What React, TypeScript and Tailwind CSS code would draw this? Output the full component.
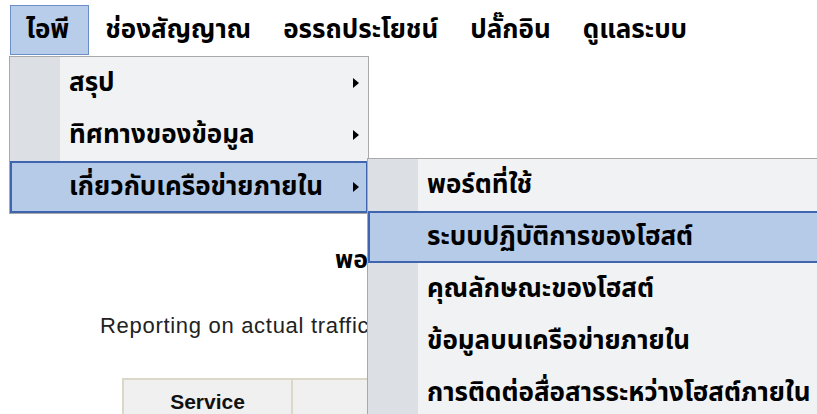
import React from "react";

const thai = "font-['Tahoma','Noto_Sans_Thai','Noto_Sans',sans-serif]";
const arial = "font-['Liberation_Sans',Arial,sans-serif]";

const topMenu = ["ไอพี", "ช่องสัญญาณ", "อรรถประโยชน์", "ปลั๊กอิน", "ดูแลระบบ"];

const ipItems = [
  { label: "สรุป", sub: true },
  { label: "ทิศทางของข้อมูล", sub: true },
  { label: "เกี่ยวกับเครือข่ายภายใน", sub: true, active: true },
];

const localItems = [
  { label: "พอร์ตที่ใช้" },
  { label: "ระบบปฏิบัติการของโฮสต์", active: true },
  { label: "คุณลักษณะของโฮสต์" },
  { label: "ข้อมูลบนเครือข่ายภายใน" },
  { label: "การติดต่อสื่อสารระหว่างโฮสต์ภายใน" },
];

type Item = { label: string; sub?: boolean; active?: boolean };

const Arrow = () => (
  <svg width="6" height="10" viewBox="0 0 6 10" className="absolute right-[7px] top-1/2 -translate-y-1/2">
    <path d="M0 0 L6 5 L0 10 Z" fill="#000" />
  </svg>
);

const MenuRow: React.FC<{ item: Item }> = ({ item }) => (
  <div
    className={`relative flex h-[52px] items-center pl-[57px] ${
      item.active ? "border-2 border-[#3f65ae] bg-[#b5cbe8]" : "border-2 border-transparent"
    }`}
  >
    <span className="text-[26px] font-bold leading-none text-black whitespace-nowrap">{item.label}</span>
    {item.sub && <Arrow />}
  </div>
);

// menu panel with the grey icon strip down its left side
const menuPanel =
  "absolute border border-[#a9a9a9] bg-[linear-gradient(to_right,#dcdfe3_50px,#f1f2f4_50px)]";

export default function App() {
  return (
    <div className={`relative h-[414px] w-[817px] overflow-hidden bg-white ${thai}`}>
      {/* top menu bar */}
      <div className="flex h-[57px] items-start pl-[10px] pt-[5px]">
        {topMenu.map((m, i) => (
          <div
            key={m}
            className={`flex h-[50px] items-center px-[15px] text-[26px] font-bold text-black ${
              i === 0 ? "border border-[#6a8fc8] bg-[#b7cde9] pr-[19px]" : "border border-transparent"
            }`}
          >
            {m}
          </div>
        ))}
      </div>

      {/* page body */}
      <div className="pt-[186px] pl-[335px] text-[25px] font-bold leading-[34px] text-black">
        พอร์ตที่ใช้ในเครือข่าย
      </div>
      <p className={`mt-[37px] whitespace-nowrap pl-[100px] ${arial} text-[22px] leading-[24px] tracking-[0.7px] text-[#222]`}>
        Reporting on actual traffic for TCP and UDP ports seen on the local network
      </p>
      <div className="mt-[40px] ml-[122px] flex w-fit gap-[2px] border-2 border-[#dcd8c8] bg-[#dcd8c8]">
        <div className={`flex h-[60px] w-[167px] justify-center bg-[#f0f0f0] pt-[6px] ${arial} text-[21px] font-bold text-[#111]`}>
          Service
        </div>
        <div className="h-[60px] w-[300px] bg-[#f0f0f0]" />
      </div>

      {/* ไอพี drop-down */}
      <div className={`${menuPanel} left-[9px] top-[56px] w-[360px]`}>
        {ipItems.map((it) => (
          <MenuRow key={it.label} item={it} />
        ))}
      </div>

      {/* local network sub-menu */}
      <div className={`${menuPanel} left-[367px] top-[158px] w-[480px]`}>
        {localItems.map((it) => (
          <MenuRow key={it.label} item={it} />
        ))}
      </div>
    </div>
  );
}
